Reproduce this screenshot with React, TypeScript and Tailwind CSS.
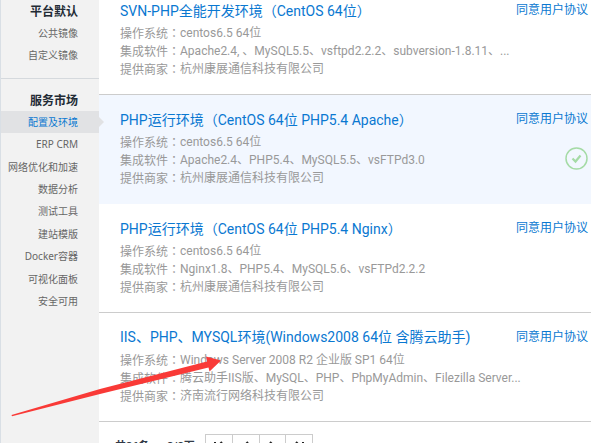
import clsx from "clsx"

interface ImageItem {
  title: string
  system: string
  software: string
  vendor: string
  selected?: boolean
}

const platformLinks = ["公共镜像", "自定义镜像"]

const marketLinks = [
  "配置及环境",
  "ERP CRM",
  "网络优化和加速",
  "数据分析",
  "测试工具",
  "建站模版",
  "Docker容器",
  "可视化面板",
  "安全可用",
]

const images: ImageItem[] = [
  {
    title: "SVN-PHP全能开发环境（CentOS 64位）",
    system: "centos6.5 64位",
    software: "Apache2.4, 、MySQL5.5、vsftpd2.2.2、subversion-1.8.11、...",
    vendor: "杭州康展通信科技有限公司",
  },
  {
    title: "PHP运行环境（CentOS 64位 PHP5.4 Apache）",
    system: "centos6.5 64位",
    software: "Apache2.4、PHP5.4、MySQL5.5、vsFTPd3.0",
    vendor: "杭州康展通信科技有限公司",
    selected: true,
  },
  {
    title: "PHP运行环境（CentOS 64位 PHP5.4 Nginx）",
    system: "centos6.5 64位",
    software: "Nginx1.8、PHP5.4、MySQL5.6、vsFTPd2.2.2",
    vendor: "杭州康展通信科技有限公司",
  },
  {
    title: "IIS、PHP、MYSQL环境(Windows2008 64位 含腾云助手)",
    system: "Windows Server 2008 R2 企业版 SP1 64位",
    software: "腾云助手IIS版、MySQL、PHP、PhpMyAdmin、Filezilla Server...",
    vendor: "济南流行网络科技有限公司",
  },
]

const pagerButtons = [
  { label: "首页", path: "M2 1v10M9 1L4 6l5 5" },
  { label: "上一页", path: "M8 1L3 6l5 5" },
  { label: "下一页", path: "M4 1l5 5-5 5" },
  { label: "末页", path: "M3 1l5 5-5 5M10 1v10" },
]

function Sidebar() {
  return (
    <aside className="w-[99px] shrink-0 border-l border-[#d9dfe5] bg-[#f2f2f2] text-right font-['Noto_Sans','Noto_Sans_CJK_SC',sans-serif] text-[10px] text-[#666]">
      <nav className="border-b border-[#d5d9dd] pt-0.5 pb-3">
        <h2 className="pr-[21px] text-xs leading-5 font-bold text-[#222b35]">平台默认</h2>
        {platformLinks.map((name) => (
          <a key={name} href="#" className="block pr-[21px] leading-[22px]">
            {name}
          </a>
        ))}
      </nav>
      <nav className="pt-3">
        <h2 className="pr-[21px] text-xs leading-5 font-bold text-[#222b35]">服务市场</h2>
        <div className="flex h-[202px] flex-col">
          {marketLinks.map((name, i) => (
            <a
              key={name}
              href="#"
              className={clsx(
                "relative flex flex-1 items-center justify-end pr-[21px]",
                i === 0 && "bg-[#e1e2e4] text-[#0a78d1]",
              )}
            >
              {name}
              {i === 0 && (
                <span className="absolute top-1/2 left-full -translate-y-1/2 border-y-[5px] border-l-[5px] border-y-transparent border-l-[#e1e2e4]" />
              )}
            </a>
          ))}
        </div>
      </nav>
    </aside>
  )
}

// The TC face centres full-width punctuation in its box
function Punct({ children }: { children: string }) {
  return <span className="font-['Noto_Sans_CJK_TC',sans-serif]">{children}</span>
}

function InfoLine({ label, value }: { label: string; value: string }) {
  return (
    <div className="flex h-[18px] whitespace-nowrap">
      <dt>
        {label}
        <Punct>：</Punct>
      </dt>
      <dd>{value}</dd>
    </div>
  )
}

function ImageRow({ item, first }: { item: ImageItem; first: boolean }) {
  return (
    <li
      className={clsx(
        "flex justify-between border-b pr-[3px] pb-4 pl-[21px]",
        first ? "pt-0" : "pt-3.5",
        item.selected ? "border-[#f2f7ff] bg-[#f2f7ff]" : "border-[#ccc]",
      )}
    >
      <div className="min-w-0">
        <h3 className="h-5 text-sm leading-5 whitespace-nowrap text-[#0a78d1]">
          {item.title
            .split(/([（）])/)
            .map((part, i) => (part === "（" || part === "）" ? <Punct key={i}>{part}</Punct> : part))}
        </h3>
        <dl className="mt-1 text-xs leading-[18px] text-[#999]">
          <InfoLine label="操作系统" value={item.system} />
          <InfoLine label="集成软件" value={item.software} />
          <InfoLine label="提供商家" value={item.vendor} />
        </dl>
      </div>
      <div className="flex shrink-0 flex-col items-end gap-[18px]">
        <a href="#" className="text-xs leading-5 text-[#0a78d1]">
          同意用户协议
        </a>
        {item.selected && (
          <svg className="size-[23px]" viewBox="0 0 23 23" fill="none" stroke="#a5dba6">
            <circle cx="11.5" cy="11.5" r="10.5" strokeWidth="1.5" />
            <path d="M7.5 11.5l3 3 5-6" strokeWidth="2.2" />
          </svg>
        )}
      </div>
    </li>
  )
}

function Pager() {
  return (
    <div className="flex items-center pt-3 pl-4 text-[11px] font-bold text-[#333b47]">
      <span className="w-[52px]">共36条</span>
      <span className="w-[38px]">2/8页</span>
      <div className="flex w-[108px] border border-[#ccc]">
        {pagerButtons.map((button) => (
          <button
            key={button.label}
            aria-label={button.label}
            className="flex h-6 flex-1 items-center justify-center border-r border-[#ccc] last:border-r-0"
          >
            <svg className="size-3" viewBox="0 0 12 12" fill="none" stroke="#222" strokeWidth="2">
              <path d={button.path} />
            </svg>
          </button>
        ))}
      </div>
    </div>
  )
}

export default function App() {
  return (
    <div className="relative flex h-screen overflow-hidden bg-white font-['Roboto','Noto_Sans_CJK_SC',sans-serif]">
      <Sidebar />
      <main className="min-w-0 flex-1">
        <ul>
          {images.map((item, i) => (
            <ImageRow key={item.title} item={item} first={i === 0} />
          ))}
        </ul>
        <Pager />
      </main>

      {/* Hand-drawn pointer to the Windows image */}
      <svg
        className="pointer-events-none absolute top-[356px] left-[11px] h-[61px] w-[211px]"
        viewBox="0 0 211 61"
        fill="#f93a37"
      >
        <path d="M0.500 59L89 33 196 5.500 195 .5 210 4.500 198.500 15.500 197.500 11.500 89 38 1 60.200Z" />
      </svg>
    </div>
  )
}
